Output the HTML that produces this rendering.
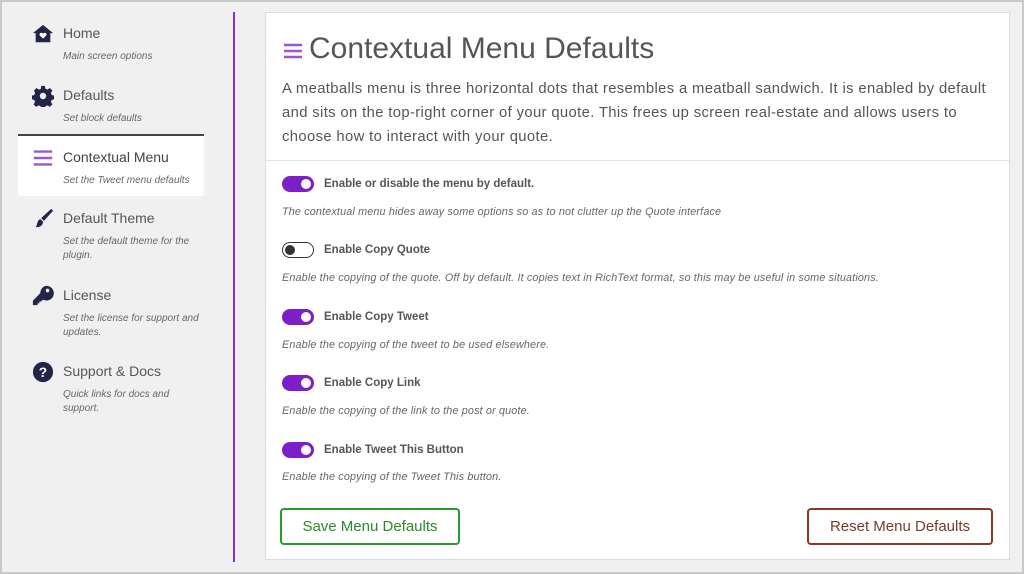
<!DOCTYPE html>
<html><head><meta charset="utf-8"><style>
*{margin:0;padding:0;box-sizing:border-box}
body{width:1024px;height:574px;background:#f0f0f0;font-family:"Liberation Sans",sans-serif;position:relative;overflow:hidden}
.frame{position:absolute;left:0;top:0;width:1024px;height:574px;border:2px solid #c9c9c9;pointer-events:none}
.abs{position:absolute}
.item{position:absolute;left:18px;width:215px}
.item .t{position:absolute;left:45px;top:0;font-size:14px;color:#555}
.item .s{position:absolute;left:45px;font-size:10px;font-style:italic;color:#666;line-height:14px;width:140px}
.ic{position:absolute;left:14px;top:-2px;width:22px;height:22px}
.vline{left:233px;top:12px;width:2px;height:550px;background:#8a2be2}
.panel{left:265px;top:12px;width:745px;height:548px;background:#fff;border:1px solid #dcdcdc}
.tog{position:absolute;left:16px;width:32px;height:16px;border-radius:8px;background:#7d1fc7}
.tog::after{content:"";position:absolute;right:3px;top:3px;width:10px;height:10px;border-radius:50%;background:#fff}
.tog.off{background:#fff;border:1.5px solid #333}
.tog.off::after{left:2px;top:2px;right:auto;background:#333}
.lab{position:absolute;left:58px;font-size:11.5px;font-weight:bold;color:#555}
.desc{position:absolute;left:16px;font-size:10.8px;letter-spacing:0.15px;font-style:italic;color:#666;white-space:nowrap}
.btn{position:absolute;top:508px;height:37px;border-radius:4px;font-size:15px;line-height:34px;text-align:center;background:#fff}
</style></head><body>
<div class="item" style="top:25px">
<svg class="ic" viewBox="0 0 24 24"><path d="M12 2L1 11h3v10h16V11h3z" fill="#22244a"/><path d="M12 17l-3.5-3.3a2 2 0 013.5-2 2 2 0 013.5 2z" fill="#fff"/></svg>
<div class="t">Home</div><div class="s" style="top:25px">Main screen options</div></div>
<div class="item" style="top:87px">
<svg class="ic" viewBox="0 0 24 24"><path fill="#22244a" d="M10 1h4l.6 3 2.3 1 2.6-1.7 2.8 2.8-1.7 2.6 1 2.3 3 .6v4l-3 .6-1 2.3 1.7 2.6-2.8 2.8-2.6-1.7-2.3 1-.6 3h-4l-.6-3-2.3-1-2.6 1.7-2.8-2.8 1.7-2.6-1-2.3-3-.6v-4l3-.6 1-2.3L2.1 6.1 4.9 3.3l2.6 1.7 2.3-1zM12 8.5a3.5 3.5 0 100 7 3.5 3.5 0 000-7z"/></svg>
<div class="t">Defaults</div><div class="s" style="top:25px">Set block defaults</div></div>
<div class="abs" style="left:18px;top:134px;width:186px;height:62px;background:#fff;border-top:2px solid #444;border-radius:0 0 3px 3px"></div>
<div class="item" style="top:149px">
<svg class="ic" viewBox="0 0 24 24"><path d="M2 5h20M2 12h20M2 19h20" stroke="#9b59c9" stroke-width="2.6"/></svg>
<div class="t" style="color:#444">Contextual Menu</div><div class="s" style="top:25px;width:150px">Set the Tweet menu defaults</div></div>
<div class="item" style="top:210px">
<svg class="ic" viewBox="0 0 24 24"><path fill="#22244a" d="M21 1l2 2-10 11-3-3zM9 12l3 3c0 4-3 6-8 6 2-2 1-7 5-9z"/></svg>
<div class="t">Default Theme</div><div class="s" style="top:25px">Set the default theme for the plugin.</div></div>
<div class="item" style="top:287px">
<svg class="ic" viewBox="0 0 24 24"><path fill="#22244a" d="M15 1a8 8 0 11-3 15l-2 2H8v2H6v2H1v-5l8-8A8 8 0 0115 1zm2 3a2 2 0 100 4 2 2 0 000-4z"/></svg>
<div class="t">License</div><div class="s" style="top:25px">Set the license for support and updates.</div></div>
<div class="item" style="top:363px">
<svg class="ic" viewBox="0 0 24 24"><circle cx="12" cy="12" r="11" fill="#22244a"/><text x="12" y="17.5" font-size="15" font-weight="bold" fill="#fff" text-anchor="middle" font-family="Liberation Sans">?</text></svg>
<div class="t">Support &amp; Docs</div><div class="s" style="top:25px;width:125px">Quick links for docs and support.</div></div>
<div class="abs vline"></div>
<div class="abs panel">
<svg class="abs" style="left:18px;top:30px" width="18" height="16" viewBox="0 0 18 16"><path d="M0 2h18M0 8h18M0 14h18" stroke="#9b59c9" stroke-width="2.6"/></svg>
<div class="abs" style="left:43px;top:19px;font-size:30px;color:#555;font-weight:300">Contextual Menu Defaults</div>
<div class="abs" style="left:16px;top:64px;width:730px;font-size:14.8px;letter-spacing:0.37px;line-height:24px;color:#555;white-space:nowrap">A meatballs menu is three horizontal dots that resembles a meatball sandwich. It is enabled by default<br>and sits on the top-right corner of your quote. This frees up screen real-estate and allows users to<br>choose how to interact with your quote.</div>
<div class="abs" style="left:0;top:147px;width:743px;height:1px;background:#e2e2e2"></div>
<div class="tog" style="top:163px"></div><div class="lab" style="top:165px">Enable or disable the menu by default.</div>
<div class="desc" style="top:193px">The contextual menu hides away some options so as to not clutter up the Quote interface</div>
<div class="tog off" style="top:229px"></div><div class="lab" style="top:231px">Enable Copy Quote</div>
<div class="desc" style="top:259px">Enable the copying of the quote. Off by default. It copies text in RichText format, so this may be useful in some situations.</div>
<div class="tog" style="top:296px"></div><div class="lab" style="top:298px">Enable Copy Tweet</div>
<div class="desc" style="top:326px">Enable the copying of the tweet to be used elsewhere.</div>
<div class="tog" style="top:362px"></div><div class="lab" style="top:364px">Enable Copy Link</div>
<div class="desc" style="top:392px">Enable the copying of the link to the post or quote.</div>
<div class="tog" style="top:429px"></div><div class="lab" style="top:431px">Enable Tweet This Button</div>
<div class="desc" style="top:458px">Enable the copying of the Tweet This button.</div>
</div>
<div class="btn" style="left:280px;width:180px;border:2px solid #2a9a2a;color:#2a8a2a">Save Menu Defaults</div>
<div class="btn" style="left:807px;width:186px;border:2px solid #8b3a1e;color:#7a3a2a">Reset Menu Defaults</div>
<div class="frame"></div>
</body></html>
